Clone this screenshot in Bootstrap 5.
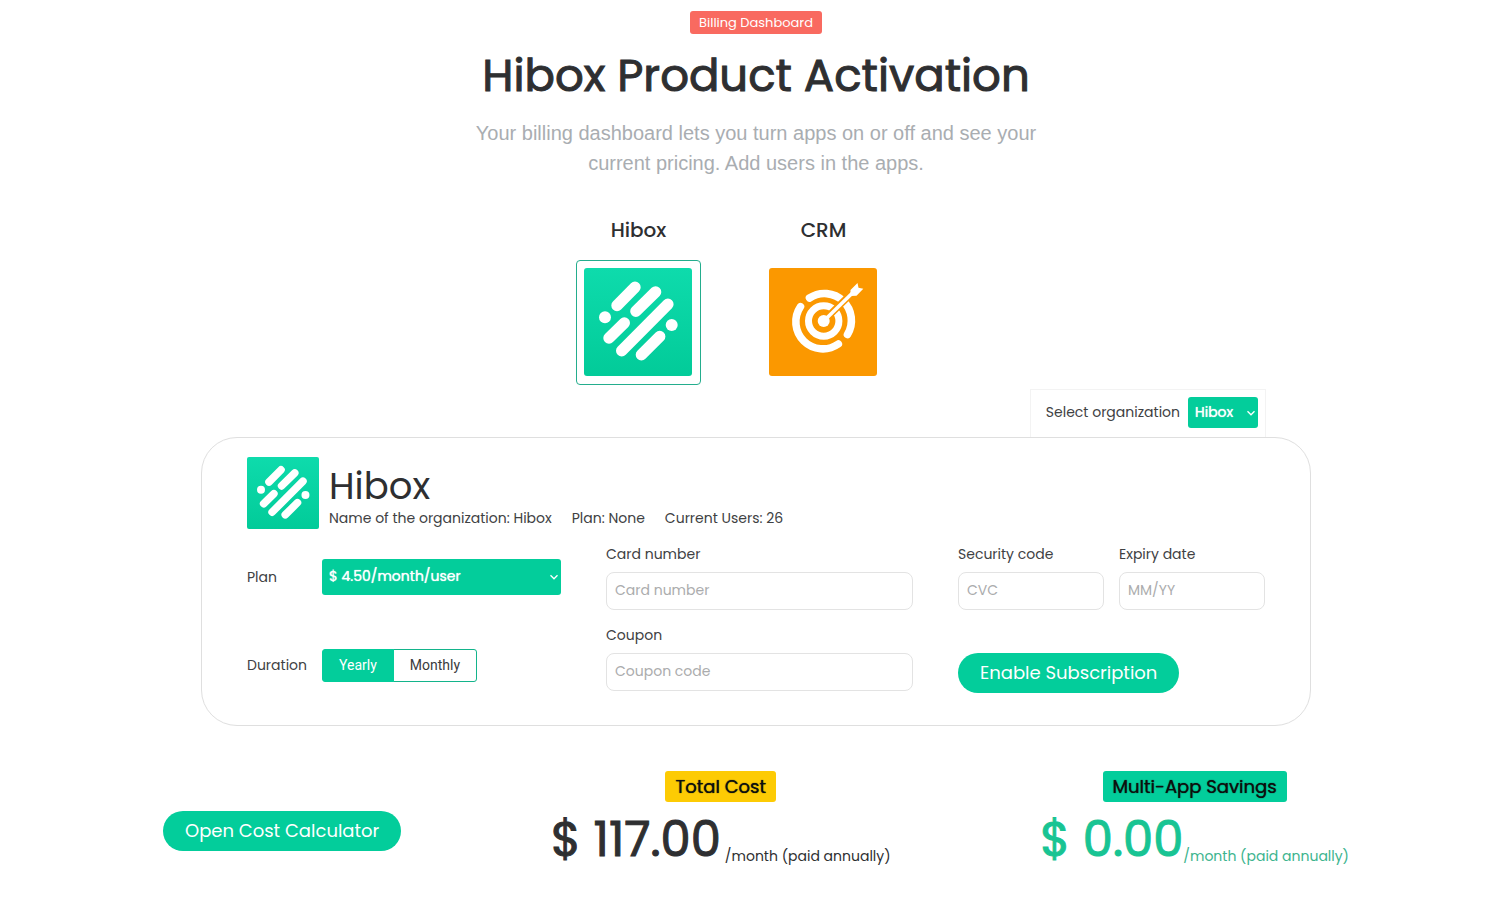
<!DOCTYPE html>
<html lang="en">
<head>
<meta charset="utf-8">
<meta name="viewport" content="width=device-width, initial-scale=1">
<title>Billing Dashboard</title>
<link href="https://cdn.jsdelivr.net/npm/bootstrap@5.3.0/dist/css/bootstrap.min.css" rel="stylesheet">
<style>
  :root { --brand: #03cd9b; --ink: #2e2f31; }
  body { font-family: Poppins, Inter, sans-serif; font-size: 14px; line-height: 21px; color: var(--ink); }
  .intro-tag { background: #f96a60; color: #fff; font-size: 13px; font-weight: 400; line-height: 15px; padding: 4px 9px; border-radius: 3px; }
  .intro { padding-top: 11px; }
  .intro h1 { font-size: 45px; font-weight: 400; -webkit-text-stroke: 1px; line-height: 60px; margin: 12px 0; }
  .intro-text { font-family: "Liberation Sans", Arial, sans-serif; font-size: 20px; line-height: 30px; color: #a9adb1; max-width: 570px; }
  .app-list { gap: 60px; padding-right: 50px; margin-top: 36px; }
  .app-list h2 { font-size: 20px; font-weight: 500; line-height: 32px; margin-bottom: 14px; }
  .app-tile { display: block; padding: 7px 8px 8px 7px; border: 1px solid transparent; border-radius: 4px; background: none; line-height: 0; }
  .app-tile.active { border-color: #24ad8d; }
  .app-tile svg { width: 108px; height: 108px; }
  .panel-wrap { max-width: 1110px; margin-top: 4px; color: #404143; }
  .org-tab { border: 1px solid #f3f3f3; border-bottom: 0; padding: 7px 7px 9px 15px; gap: 8px; margin-right: 45px; }
  .panel { border: 1px solid #dfdfdf; border-radius: 36px; padding: 19px 45px 32px; }
  .panel-logo { width: 72px; height: 72px; }
  .panel-title { margin-left: 10px; }
  .panel h3 { font-size: 37px; font-weight: 400; line-height: 44px; margin: 7px 0 0; color: #2e2f31; }
  .panel-facts { column-gap: 20px; }
  .brand-select { background-color: var(--brand); color: #fff; border: 0; border-radius: 3px; font-size: 14px; font-weight: 400; text-shadow: 0 0 1px #fff; line-height: 20px; padding: 7px 22px 9px 7px;
    background-image: url("data:image/svg+xml,%3Csvg xmlns='http://www.w3.org/2000/svg' viewBox='0 0 10 10'%3E%3Cpath d='M1.5 3.2 5 6.8l3.5-3.6' fill='none' stroke='%23fff' stroke-width='1.3'/%3E%3C/svg%3E"); background-size: 10px 10px; background-position: right 2px center; }
  .org-select { width: 70px; padding: 5px 18px 6px 7px; }
  .field-grid { display: grid; grid-template-columns: 1fr; gap: 24px 45px; margin-top: 15px; }
  @media (min-width: 992px) { .field-grid { grid-template-columns: 314fr 307fr 307fr; } }
  .plan-row { padding-top: 15px; }
  .plan-row + .plan-row { padding-top: 54px; }
  .plan-label { width: 75px; flex: none; }
  .duration .btn { --bs-btn-border-color: #13b48b; --bs-btn-color: #3a3b3c; --bs-btn-border-radius: 3px; font-family: Roboto, sans-serif; font-size: 14px; line-height: 21px; padding: 5px 16px; }
  .duration .btn-check:checked + .btn { background: var(--brand); border-color: var(--brand); color: #fff; }
  .field-name { margin-bottom: 7px; display: block; }
  .input-stack { display: grid; align-content: start; gap: 15px; }
  .code-pair { --bs-gutter-x: 15px; }
  .panel .form-control { font-size: 14px; line-height: 20px; padding: 7px 8px 9px; border-color: #e3e3e3; border-radius: 8px; }
  .panel .form-control::placeholder { color: #abacad; }
  .pill { background: var(--brand); color: #fff; font-size: 18px; font-weight: 400; line-height: 28px; padding: 6px 22px; border: 0; border-radius: 20px; }
  .pill:hover { background: #02b98b; color: #fff; }
  .enable { margin-top: 43px; }
  .totals { max-width: 1186px; margin-top: 45px; }
  .calculator { margin-top: 12px; }
  .totals-tag { display: inline-block; background: var(--brand); color: #0c0f0e; font-size: 18px; font-weight: 400; text-shadow: 0 0 1px #0c0f0e; line-height: 27px; padding: 2px 10px; border-radius: 3px; }
  .totals-tag.cost { background: #fdcb04; }
  .amount { font-size: 48px; font-weight: 400; -webkit-text-stroke: 1px; line-height: 76px; }
  .savings { color: #18c493; }
  .savings small { color: #3cb48e; }
  .period { font-size: 14px; font-weight: 400; line-height: 21px; padding-bottom: 11px; }
</style>
</head>
<body>
<header class="intro text-center container-fluid">
  <div class="d-flex justify-content-center"><span class="intro-tag">Billing Dashboard</span></div>
  <h1>Hibox Product Activation</h1>
  <p class="intro-text mx-auto mb-0">Your billing dashboard lets you turn apps on or off and see your current pricing. Add users in the apps.</p>
</header>

<main>
  <section class="app-list d-flex justify-content-center text-center">
    <div>
      <h2>Hibox</h2>
      <button type="button" class="app-tile active" aria-label="Hibox">
        <svg viewBox="0 0 108 108">
          <defs><linearGradient id="mintTile" x1="0" y1="0" x2="0" y2="1"><stop offset="0" stop-color="#0edbac"/><stop offset="1" stop-color="#02cb99"/></linearGradient></defs>
          <rect width="108" height="108" rx="3" fill="url(#mintTile)"/>
          <g id="hiboxMark"><path d="M33 37.5 51 19.3M51.9 43.3 71.6 23.9M37.7 82.7 83.9 36.3M25 70 40.3 55M57.4 86.7 75.7 68.5" stroke="#fff" stroke-width="11.4" stroke-linecap="round"/>
          <circle cx="21" cy="49.3" r="6" fill="#fff"/><circle cx="87.7" cy="57" r="6" fill="#fff"/></g>
        </svg>
      </button>
    </div>
    <div>
      <h2>CRM</h2>
      <button type="button" class="app-tile" aria-label="CRM">
        <svg viewBox="0 0 108 108">
          <rect width="108" height="108" rx="3" fill="#fb9800"/>
          <g fill="none" stroke="#fff" stroke-linecap="round">
            <path d="M40.500 30A27 27 0 0 1 78.500 66.500M31.500 38.700A27 27 0 0 0 69.300 76" stroke-width="7.6"/>
            <circle cx="54.700" cy="53" r="15.2" stroke-width="7"/>
          </g>
          <path d="M58 49.500 83 25" stroke="#fb9800" stroke-width="7"/>
          <circle cx="54.700" cy="53" r="6" fill="#fff"/>
          <path d="M55 52.800 88 20.500" stroke="#fff" stroke-width="3.600"/>
          <path d="M81.500 28V22L88.500 15 89.500 19.700 94.300 20.800 87.500 27.800Z" fill="#fff"/>
        </svg>
      </button>
    </div>
  </section>

  <div class="panel-wrap mx-auto">
    <div class="d-flex justify-content-end">
      <div class="org-tab d-flex align-items-center">
        <label for="org">Select organization</label>
        <select id="org" class="form-select brand-select org-select"><option>Hibox</option></select>
      </div>
    </div>
    <form class="panel">
      <div class="d-flex">
        <svg class="panel-logo flex-shrink-0" viewBox="0 0 108 108" aria-hidden="true">
          <rect width="108" height="108" rx="3" fill="url(#mintTile)"/><use href="#hiboxMark"/>
        </svg>
        <div class="panel-title">
          <h3>Hibox</h3>
          <div class="panel-facts d-flex flex-wrap">
            <span>Name of the organization: Hibox</span><span>Plan: None</span><span>Current Users: 26</span>
          </div>
        </div>
      </div>
      <div class="field-grid">
        <div>
          <div class="plan-row d-flex align-items-center">
            <label class="plan-label" for="plan">Plan</label>
            <select id="plan" class="form-select brand-select"><option>$ 4.50/month/user</option></select>
          </div>
          <div class="plan-row d-flex align-items-center">
            <span class="plan-label" id="durationName">Duration</span>
            <div class="btn-group duration" role="group" aria-labelledby="durationName">
              <input type="radio" class="btn-check" name="duration" id="yearly" checked>
              <label class="btn" for="yearly">Yearly</label>
              <input type="radio" class="btn-check" name="duration" id="monthly">
              <label class="btn" for="monthly">Monthly</label>
            </div>
          </div>
        </div>
        <div class="input-stack">
          <div>
            <label class="field-name" for="card">Card number</label>
            <input id="card" class="form-control" placeholder="Card number">
          </div>
          <div>
            <label class="field-name" for="coupon">Coupon</label>
            <input id="coupon" class="form-control" placeholder="Coupon code">
          </div>
        </div>
        <div>
          <div class="row code-pair">
            <div class="col">
              <label class="field-name" for="cvc">Security code</label>
              <input id="cvc" class="form-control" placeholder="CVC">
            </div>
            <div class="col">
              <label class="field-name" for="expiry">Expiry date</label>
              <input id="expiry" class="form-control" placeholder="MM/YY">
            </div>
          </div>
          <button type="submit" class="btn pill enable">Enable Subscription</button>
        </div>
      </div>
    </form>
  </div>

  <section class="totals mx-auto d-flex flex-wrap justify-content-between align-items-center gap-3">
    <button type="button" class="btn pill calculator">Open Cost Calculator</button>
    <div class="text-center">
      <span class="totals-tag cost">Total Cost</span>
      <div class="d-flex align-items-end"><span class="amount">$ 117.00</span><span class="period ms-1">/month (paid annually)</span></div>
    </div>
    <div class="text-center savings">
      <span class="totals-tag">Multi-App Savings</span>
      <div class="d-flex align-items-end"><span class="amount">$ 0.00</span><small class="period">/month (paid annually)</small></div>
    </div>
  </section>
</main>
<script src="https://cdn.jsdelivr.net/npm/bootstrap@5.3.0/dist/js/bootstrap.bundle.min.js"></script>
</body>
</html>
